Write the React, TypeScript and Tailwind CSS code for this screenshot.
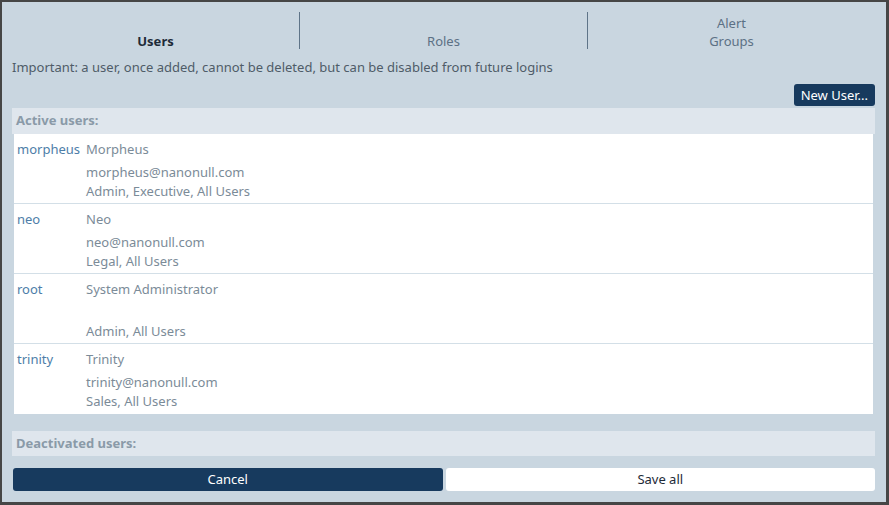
import React from "react";

const users = [
  { id: "morpheus", name: "Morpheus", email: "morpheus@nanonull.com", roles: "Admin, Executive, All Users" },
  { id: "neo", name: "Neo", email: "neo@nanonull.com", roles: "Legal, All Users" },
  { id: "root", name: "System Administrator", email: "", roles: "Admin, All Users" },
  { id: "trinity", name: "Trinity", email: "trinity@nanonull.com", roles: "Sales, All Users" },
];

export default function App() {
  return (
    <div
      className="w-[889px] h-[505px] bg-[#464646] pt-[2px] pl-[2px] pr-[3px] pb-[3px] overflow-hidden"
      style={{ fontFamily: '"Noto Sans", "Open Sans", sans-serif' }}
    >
      <div className="w-full h-full bg-[#c9d6e0] pl-[10px] pr-[11px] pt-[10px] flex flex-col text-[13px]">
        <div className="flex h-[38px]">
          <div className="flex-1 flex items-end justify-center leading-[18px] font-bold text-[#1e2b38]">Users</div>
          <div className="w-px bg-[#5e7488] h-[37px]" />
          <div className="flex-1 flex items-end justify-center leading-[18px] text-[#5c7185]">Roles</div>
          <div className="w-px bg-[#5e7488] h-[37px]" />
          <div className="flex-1 flex items-end justify-center leading-[18px] text-[#5c7185] text-center">
            Alert
            <br />
            Groups
          </div>
        </div>
        <div className="mt-[8px] leading-[18px] text-[#4f5c68]">
          Important: a user, once added, cannot be deleted, but can be disabled from future logins
        </div>
        <div className="flex justify-end mt-[8px]">
          <button className="h-[22px] px-[7px] rounded-[3px] bg-[#173a5e] text-white leading-[22px]">New User...</button>
        </div>
        <div className="mt-[2px] h-[26px] bg-[#dfe6ed] flex items-center pl-[4px] font-bold text-[#8a9aa8]">Active users:</div>
        <div className="mx-[2px] bg-white">
          {users.map((u, i) => (
            <div
              key={u.id}
              className={`h-[70px] flex ${i < users.length - 1 ? "border-b border-[#d3dfe7]" : ""}`}
            >
              <div className="w-[72px] pl-[3px] pt-[6px] leading-[19px] text-[#4d7ea8]">{u.id}</div>
              <div className="flex flex-col pt-[6px] text-[#7b8b98] leading-[19px]">
                <div>{u.name}</div>
                <div className="mt-[4px] h-[19px]">{u.email}</div>
                <div>{u.roles}</div>
              </div>
            </div>
          ))}
        </div>
        <div className="mt-[17px] h-[25px] bg-[#dfe6ed] flex items-center pl-[4px] font-bold text-[#8a9aa8]">Deactivated users:</div>
        <div className="mt-[12px] flex gap-[3px] pl-px">
          <button className="flex-1 h-[23px] rounded-[3px] bg-[#173a5e] text-white">Cancel</button>
          <button className="flex-1 h-[23px] rounded-[3px] bg-white text-[#1e2b38]">Save all</button>
        </div>
      </div>
    </div>
  );
}
